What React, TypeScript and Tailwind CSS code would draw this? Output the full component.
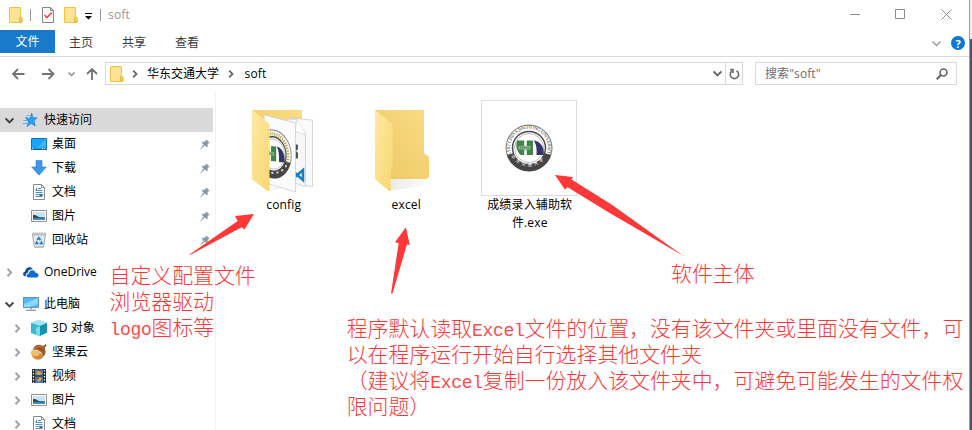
import React from "react";

const ui = "font-['Open_Sans','Noto_Sans_CJK_SC',sans-serif]";

function MiniFolder() {
  return (
    <svg width="14" height="16" viewBox="0 0 14 16" className="shrink-0">
      <path d="M.5.5h11v9.5l1.500 1.500v4H.5z" fill="#ffe394" stroke="#ebc445" />
      <path d="M10.5 15V10.5l1-1 1.500 1.500v4z" fill="#f5cf57" stroke="#dfb53a" strokeWidth=".8" />
    </svg>
  );
}

function Chevron({ dir, color, size = 8, w = 1.8 }: { dir: "r" | "d"; color: string; size?: number; w?: number }) {
  return (
    <svg width={size} height={size} viewBox="0 0 8 8" className="shrink-0" fill="none" stroke={color} strokeWidth={w}>
      <path d={dir === "r" ? "M2.2 .7 5.5 4 2.2 7.3" : "M.5 2.2 4 5.7 7.5 2.2"} />
    </svg>
  );
}

function Pin() {
  return (
    <svg width="10" height="11" viewBox="0 0 10 11" className="shrink-0">
      <path d="M6 .3 9.7 3.8 8.5 4.3 7.6 5.4 7.8 7.4 6.7 8.2 4.7 6.5.8 10.3.3 9.9 3.5 5.6 1.7 3.8 2.6 2.7 4.7 2.8 5.7 1.8z" fill="#8c9aa6" />
    </svg>
  );
}

function Glyph({ name }: { name: string }) {
  return (
    <svg width="16" height="16" viewBox="0 0 16 16" className="shrink-0 overflow-visible">
      {name === "star" && (
        <>
          <path d="M8.700 1 10 5.800h4.200L11 8.800l1.200 5.200-4-2.500L4 14.500l1.500-5L3 6.500h4z" fill="#2f9df0" stroke="#1e83d4" strokeWidth=".7" />
          <path d="M3.5 3.5h3M.500 8.500H4M0 11.500h4M2 5.500h3" stroke="#56aaf0" strokeWidth=".9" />
        </>
      )}
      {name === "desktop" && (
        <>
          <path d="M.5 2.5h15v11H.5z" fill="#19a5fb" stroke="#0876c7" />
          <path d="M15 3v7L5 13z" fill="#40b6ff" />
          <path d="M0 13.3h16" stroke="#075b99" />
          <path d="M1 12.7h2M11 12.7h4" stroke="#fff" strokeDasharray="1 1" />
        </>
      )}
      {name === "down" && <path d="M5 .5h6V7h4.300L8 15.200.7 7H5z" fill="#3c97e7" stroke="#2d7dc9" strokeWidth=".6" />}
      {name === "doc" && (
        <>
          <path d="M2.5.5h8l3 3v12h-11z" fill="#fff" stroke="#8a8a8a" />
          <path d="M10.5.5v3h3" fill="none" stroke="#8a8a8a" />
          <path d="M7 4.5h3M4.5 6.5h7M4.5 8.5h7M4.5 10.5h3M4.5 12.5h7M8 10.5h3.5" stroke="#4d8cc4" />
          <path d="m4.5 6 1.500-3V6zM8.5 10h3v2h-3z" fill="#2d73b5" />
        </>
      )}
      {name === "picture" && (
        <>
          <path d="M.5 2.5h15v11H.5z" fill="#fff" stroke="#929292" />
          <path d="M2 4h12v8H2z" fill="#c9e4f8" />
          <path d="M2 7c3-.5 4 2 7 2l5 .2V12H2z" fill="#31648c" />
          <path d="M2 7.2c3-.7 4 2 7 2.3H2z" fill="#304b3c" />
          <path d="M2 10.5c4-1 8 0 12-.5v2H2z" fill="#4288bd" />
        </>
      )}
      {name === "bin" && (
        <>
          <path d="m1.500 2 2 13.200h9L14.500 2z" fill="#dde1e4" stroke="#9ca3a8" />
          <path d="M1.500 1h13v2h-13z" fill="#c8ced2" stroke="#a8adb0" strokeWidth=".6" />
          <path d="m3.500 4 1 10M12.500 4l-1 10" stroke="#f7f7f7" />
          <path d="m6.200 8 1.700-2.200L9.600 8M5.800 9.200 4.900 11.500h2.500M10.200 9.200l1 2.300H8.600" stroke="#1877c9" strokeWidth="1.500" fill="none" />
        </>
      )}
      {name === "cloud" && (
        <>
          <path d="M2.800 12.500C-.7 12.300-.5 8 2 7.800 2.200 3.200 7.800 1.500 10 5.300 6.500 5 5 6.500 4.900 8.700c-2 .4-2.600 2.500-2.100 3.800z" fill="#0a4fa8" />
          <path d="M6 13.500c-3.300-.2-3-4 0-4.100C6 5.800 11.500 5 12.400 8.700c3.600-.3 4.300 4.200 1.200 4.800z" fill="#0f6ccb" />
        </>
      )}
      {name === "pc" && (
        <>
          <path d="M.5 1.500h15v10H.5z" fill="#51b9f3" stroke="#6590ac" />
          <path d="M15 2v6L6 11H1V8z" fill="#8cd7fc" />
          <path d="M7 12h2v1.500H7z" fill="#9fb4c1" />
          <path d="M3 14.300h10" stroke="#8499a7" strokeWidth="1.300" />
        </>
      )}
      {name === "cube" && (
        <>
          <path d="m8 0 8 3v9.500L8 16 0 13V3z" fill="#36b9d0" />
          <path d="m8 0 8 3-6 3L0 3z" fill="#a2e8f1" />
          <path d="m9 6 7-3v9.500L9 16z" fill="#1393b0" />
          <path d="M5 7.500 9 6v10l-4-1.500z" fill="#7cdbe7" />
        </>
      )}
      {name === "nut" && (
        <>
          <path d="M1 6c-2 5 1 9 5 9.600 4 .6 7-2 7-5z" fill="#d48a36" />
          <path d="M1 6c-1 3 0 6 2 6 4 1 7-2 6-5z" fill="#f0bd6a" />
          <path d="M2 6C3 1 8-.5 12 2l3-2 .5 1.500L13.500 4c2 3 1 7-1 8C11 8 7 5 2 6z" fill="#9b5a23" />
          <path d="M4 5c2-3 5-4 8-2" stroke="#c98a49" fill="none" />
        </>
      )}
      {name === "film" && (
        <>
          <path d="M1 1h14v14H1z" fill="#25292d" />
          <path d="M4 1.500h8v6H4z" fill="#5479a5" />
          <path d="M4 8.500h8V15H4z" fill="#4176b6" />
          <path d="M5 6c1-3 3-4 4-2l2 1-2 2zM6 13l3-4 2 2-3 3z" fill="#dfae3a" />
          <path d="M5 10h3v1H5zM8 3h2v1H8z" fill="#c45543" />
          <path d="M2.500 2v13M13.500 2v13" stroke="#fff" strokeWidth="1.200" strokeDasharray="1.500 1.500" />
        </>
      )}
    </svg>
  );
}

function NavRow({ icon, label, depth = 0, arrow, pin, active }: { icon: string; label: string; depth?: number; arrow?: "r" | "d"; pin?: boolean; active?: boolean }) {
  return (
    <div className={`flex h-6 w-[213px] shrink-0 items-center text-[12px] leading-[18px] text-black ${active ? "bg-[#d9d9d9]" : ""} ${depth ? "pl-[13px]" : "pl-[5px]"}`}>
      <span className="flex w-[18px] shrink-0 items-center">
        {arrow && <Chevron dir={arrow} color={arrow === "d" ? "#404040" : "#a6a6a6"} size={9} />}
      </span>
      <Glyph name={icon} />
      <span className="ml-[5px] grow whitespace-nowrap">{label}</span>
      {pin && <span className="mr-[3px] flex"><Pin /></span>}
    </div>
  );
}

function Seal({ className, id, lettered }: { className: string; id: string; lettered?: boolean }) {
  return (
    <svg viewBox="0 0 48 48" className={className} preserveAspectRatio="none">
      <circle cx="24" cy="24" r="23" fill="#fff" stroke="#777" strokeWidth="1" />
      <path d="M2 31A23 23 0 0 0 46 31L39 29A16 16 0 0 1 9 29z" fill="#454545" />
      <circle cx="24" cy="24" r="16.500" fill="#fff" stroke="#4c4c4c" strokeWidth="1.500" />
      <circle cx="24" cy="24" r="14.500" fill="none" stroke="#777" strokeWidth=".5" />
      <path d="M12 16.500h7.500V31H15.500c-4-4-5-9-3.500-14.500zM21.500 16.500H28V31h-6.500z" fill="#408446" />
      <path d="M19.500 16.500h2v5h-2zM19.500 27h2v4h-2z" fill="#fff" />
      <path d="M13.500 22h12v3.500h-12z" fill="#8bb092" />
      <path d="M15 23.700h9" stroke="#47684c" strokeWidth="1" strokeDasharray="1.200 .8" />
      <path d="M28.800 16.500c7 1 10.500 6.500 10 14.500h-7.300c.5-6-.2-11-2.700-14.500z" fill="#34366a" />
      <path id={id + "a"} d="M6.500 31A19 19 0 1 1 41.500 31" fill="none" stroke={lettered ? "none" : "#b9a24f"} strokeWidth="3.500" strokeDasharray="1.300 1.300" />
      <path id={id + "b"} d="M6 32A21 21 0 0 0 42 32" fill="none" stroke={lettered ? "none" : "#ddd"} strokeWidth="2" strokeDasharray="2.500 4" />
      {lettered && (
        <>
          <text fontSize="5" fill="#484848" fontFamily="Liberation Serif" textLength="76">
            <textPath href={"#" + id + "a"}>EAST CHINA JIAOTONG UNIVERSITY</textPath>
          </text>
          <text fontSize="4.500" fill="#fff" fontFamily="Noto Sans CJK SC" textLength="38">
            <textPath href={"#" + id + "b"}>华东交通大学</textPath>
          </text>
        </>
      )}
    </svg>
  );
}

function FolderDefs({ id }: { id: string }) {
  return (
    <defs>
      <linearGradient id={id + "f"} x1="0" y1="0" x2="1" y2="1">
        <stop offset="0" stopColor="#ffeaa4" />
        <stop offset="1" stopColor="#f8d671" />
      </linearGradient>
      <linearGradient id={id + "b"} x1="1" y1="0" x2="0" y2="1">
        <stop offset="0" stopColor="#f9dc84" />
        <stop offset="1" stopColor="#ecc864" />
      </linearGradient>
      <linearGradient id={id + "s"} x1="0" y1="0" x2="1" y2="0">
        <stop offset="0" stopColor="#ddd" />
        <stop offset="1" stopColor="#fff" />
      </linearGradient>
    </defs>
  );
}

function EmptyFolder() {
  return (
    <svg width="96" height="96" viewBox="0 0 96 96">
      <FolderDefs id="e" />
      <path d="m32 91 2-12h37l5 5z" fill="url(#es)" opacity=".6" />
      <path d="M17 10h49v43l5 4v19q0 3-3 3H17z" fill="url(#eb)" />
      <path d="m17 10 17.500 14v44l-1.500 2v19.500q0 2.500-3 .5L17 79z" fill="url(#ef)" />
    </svg>
  );
}

function FullFolder() {
  return (
    <div className="relative h-24 w-24">
      <svg width="96" height="96" viewBox="0 0 96 96">
        <FolderDefs id="c" />
        <path d="m32 91 10-4h42l-9-5z" fill="url(#cs)" opacity=".7" />
        <path d="M16 10h50v69H16z" fill="url(#cb)" />
        <path d="m54 18 22.500 2v67L55 81z" fill="#fafafa" stroke="#c9c9c9" strokeWidth=".7" />
        <path d="m51 19 10 .500 8.500 14v53L50 80z" fill="#f7f7f7" stroke="#c9c9c9" strokeWidth=".7" />
        <path d="m61 19.500-2 12 10.500 3" fill="#fff" stroke="#d0d0d0" strokeWidth=".7" />
        <path d="m57 43 5 2v4l-2 2 2 2v5l-5 2z" fill="#505357" />
        <path d="m59 73 8 7V70l-8 7" fill="none" stroke="#147ec5" strokeWidth="2.500" />
        <path d="M28 15 59.500 23v69L33 84z" fill="#fafbfb" stroke="#cfcfcf" strokeWidth=".8" />
      </svg>
      <div className="absolute left-[33px] top-[24px] h-[60px] w-[26px] overflow-hidden">
        <Seal id="cfg" className="absolute left-[-15px] top-[5px] h-[50px] w-[38px] max-w-none skew-y-6" />
      </div>
      <svg width="96" height="96" viewBox="0 0 96 96" className="absolute inset-0">
        <path d="m16 10 17.500 14v66q0 2-3 .5L16 79z" fill="url(#cf)" />
      </svg>
    </div>
  );
}

function FileTile({ children, label }: { children: React.ReactNode; label: React.ReactNode }) {
  return (
    <div className="flex w-[122.5px] shrink-0 flex-col items-center">
      {children}
      <div className="text-center text-[12px] leading-[17.5px] tracking-[0.15px] text-black">{label}</div>
    </div>
  );
}

function Note({ className, lines }: { className: string; lines: React.ReactNode[] }) {
  return (
    <div className={`absolute whitespace-nowrap font-['Noto_Sans_CJK_SC',sans-serif] text-[20.9px] leading-[26px] font-light text-[#ff3737] ${className}`}>
      {lines.map((line, i) => (
        <p key={i} className="h-[26px]">{line}</p>
      ))}
    </div>
  );
}

function Latin({ children }: { children: string }) {
  return <span className="font-['Liberation_Mono',monospace] text-[18px] leading-none font-normal tracking-[-0.3px] text-[#ff4a4a]">{children}</span>;
}

export default function App() {
  return (
    <div className={`relative flex h-[430px] w-[972px] overflow-hidden bg-white ${ui}`}>
      <div className="flex w-[969px] shrink-0 flex-col">
        <header className="flex h-[30px] shrink-0 items-center pl-[9px]">
          <MiniFolder />
          <span className="ml-[7px] h-3 w-px bg-[#999]" />
          <svg width="12" height="16" viewBox="0 0 12 16" className="ml-[11px]">
            <path d="M.5.5h8l3 3v12H.5z" fill="#f7f8fa" stroke="#858585" />
            <path d="M8.500.5v3h3" fill="none" stroke="#858585" />
            <path d="m2.500 8 2.500 2.500L9.800 5.500" fill="none" stroke="#e84a3c" strokeWidth="1.700" />
          </svg>
          <span className="ml-[10px] flex"><MiniFolder /></span>
          <svg width="7" height="7" viewBox="0 0 7 7" className="ml-[7px] mt-[2px]"><path d="M0 0h7v1H0zM0 3h7L3.500 6.500z" /></svg>
          <span className="ml-[8px] h-3 w-px bg-[#999]" />
          <span className="ml-[7px] text-[12px] tracking-[0.2px] text-[#999]">soft</span>
          <svg width="105" height="12" viewBox="0 0 105 12" className="ml-auto mr-[14px]" fill="none" stroke="#8b8b8b">
            <path d="M0 5.500h10M45.500 .500h9v9h-9zM91.500 .500l10 10m0-10-10 10" />
          </svg>
        </header>
        <nav className="flex h-[27px] shrink-0 border-b border-[#d9dadb] text-[12px] leading-[25px] text-[#3b3b3b]">
          <span className="h-[23px] w-[55px] bg-[#1979ca] text-center leading-[23px] text-white">文件</span>
          <span className="ml-[14px]">主页</span>
          <span className="ml-[29px]">共享</span>
          <span className="ml-[29px]">查看</span>
          <span className="ml-auto mr-[4px] flex items-center gap-[10px]">
            <Chevron dir="d" color="#999" size={9} w={1.3} />
            <span className="flex h-[14px] w-[14px] items-center justify-center rounded-full bg-[#0b78d7] text-[11px] font-bold leading-none text-white">?</span>
          </span>
        </nav>
        <div className="flex h-[35px] shrink-0 items-center pb-[2px] pl-3">
          <svg width="88" height="16" viewBox="0 0 88 16" fill="none" stroke="#737373" strokeWidth="1.800">
            <path d="M12.500 8H1M6 3 1 8l5 5M30 8h11.500M36.500 3l5 5-5 5M80 14V3M75 8l5-5 5 5" />
            <path d="m56.500 6.500 3 3 3-3" stroke="#8c8c8c" strokeWidth="1.500" />
          </svg>
          <div className="ml-[5px] flex h-[23px] w-[638px] items-center border border-[#d9d9d9] pl-1 text-[12px] text-black">
            <MiniFolder />
            <span className="ml-[7px] flex"><Chevron dir="r" color="#666" size={8} /></span>
            <span className="ml-[8px]">华东交通大学</span>
            <span className="ml-[8px] flex"><Chevron dir="r" color="#666" size={8} /></span>
            <span className="ml-[9.5px] tracking-[0.2px]">soft</span>
            <span className="ml-auto mr-[3px] flex"><Chevron dir="d" color="#666" size={9} /></span>
            <span className="flex h-full w-[17px] items-center justify-center border-l border-[#d9d9d9]">
              <svg width="11" height="12" viewBox="0 0 11 12" fill="none" stroke="#6b6b6b" strokeWidth="1.600">
                <path d="M7.500 2.800A4.200 4.200 0 1 1 3 3M1 1.500h3v3.500" />
              </svg>
            </span>
          </div>
          <div className="ml-3 flex h-[23px] w-[202px] items-center border border-[#d9d9d9] pl-[9px] text-[12px] text-[#6d6d6d]">
            <span className="tracking-[0.1px]">搜索"soft"</span>
            <svg width="12" height="12" viewBox="0 0 12 12" className="ml-auto mr-[8px]" fill="none" stroke="#666" strokeWidth="1.600">
              <circle cx="7.500" cy="4.500" r="3.500" />
              <path d="m5 7-4.300 4.300" strokeWidth="2" />
            </svg>
          </div>
        </div>
        <main className="flex h-[338px]">
          <aside className="flex w-[216px] shrink-0 flex-col overflow-hidden border-r border-[#f3f3f3] pt-4">
            <NavRow icon="star" label="快速访问" arrow="d" active />
            <NavRow icon="desktop" label="桌面" depth={1} pin />
            <NavRow icon="down" label="下载" depth={1} pin />
            <NavRow icon="doc" label="文档" depth={1} pin />
            <NavRow icon="picture" label="图片" depth={1} pin />
            <NavRow icon="bin" label="回收站" depth={1} pin />
            <div className="h-2 shrink-0" />
            <NavRow icon="cloud" label="OneDrive" arrow="r" />
            <div className="h-2 shrink-0" />
            <NavRow icon="pc" label="此电脑" arrow="d" />
            <NavRow icon="cube" label="3D 对象" depth={1} arrow="r" />
            <NavRow icon="nut" label="坚果云" depth={1} arrow="r" />
            <NavRow icon="film" label="视频" depth={1} arrow="r" />
            <NavRow icon="picture" label="图片" depth={1} arrow="r" />
            <NavRow icon="doc" label="文档" depth={1} arrow="r" />
          </aside>
          <section className="flex pl-[6.5px] pt-2">
            <FileTile label="config"><FullFolder /></FileTile>
            <FileTile label="excel"><EmptyFolder /></FileTile>
            <FileTile label={<span className="block pl-[2px]">成绩录入辅助软<br />件.exe</span>}>
              <div className="flex h-24 w-24 items-center justify-center border border-[#dedede]">
                <Seal id="exe" className="h-12 w-12" lettered />
              </div>
            </FileTile>
          </section>
        </main>
      </div>
      <div className="flex w-[3px] flex-col border-l border-[#9a9da3]">
        <div className="h-[39px] bg-[#eeeff1]" />
        <div className="grow bg-[#45546c]" />
      </div>

      <svg width="972" height="430" viewBox="0 0 972 430" className="absolute inset-0" fill="#fd3838">
        <path d="M189.500 254.500 237.700 221 235 216 254 214 244.500 229.500 241.700 227.300 190 255z" />
        <path d="M391 293.500 398.700 243 395 242.200 405.900 227.300 409.800 245 407 244.300 392.500 293.500z" />
        <path d="M683.500 256 611.500 204.500 571.500 179.500 573 177 555 175 565 189.700 567.300 187 608 212z" />
      </svg>
      <Note className="left-[109.5px] top-[261px]" lines={["自定义配置文件", "浏览器驱动", <><Latin>logo</Latin>图标等</>]} />
      <Note className="left-[671px] top-[259px]" lines={["软件主体"]} />
      <Note
        className="left-[346.7px] top-[314px]"
        lines={[
          <>程序默认读取<Latin>Excel</Latin>文件的位置，没有该文件夹或里面没有文件，可</>,
          "以在程序运行开始自行选择其他文件夹",
          <>（建议将<Latin>Excel</Latin>复制一份放入该文件夹中，可避免可能发生的文件权</>,
          "限问题）",
        ]}
      />
    </div>
  );
}
